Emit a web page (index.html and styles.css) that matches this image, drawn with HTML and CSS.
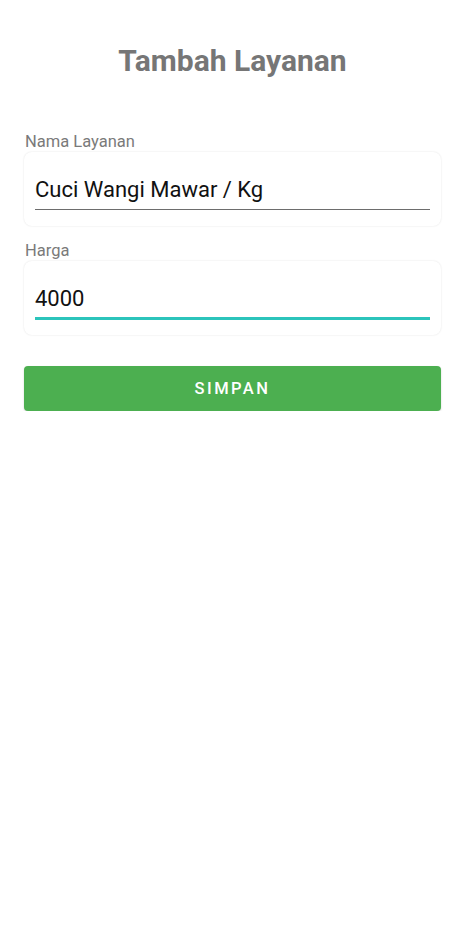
FILE: index.html
```html
<!DOCTYPE html>
<html>
<head>
<meta charset="utf-8">
<link rel="stylesheet" href="styles.css">
</head>
<body>
<main class="page">
  <h1 class="title">Tambah Layanan</h1>
  <form class="form">
    <div class="field">
      <label class="label">Nama Layanan</label>
      <div class="card">
        <div class="input">Cuci Wangi Mawar / Kg</div>
      </div>
    </div>
    <div class="field">
      <label class="label">Harga</label>
      <div class="card">
        <div class="input focused">4000</div>
      </div>
    </div>
    <button type="button" class="btn">SIMPAN</button>
  </form>
</main>
</body>
</html>
```
FILE: styles.css
```css
html, body {
  margin: 0;
  padding: 0;
  background: #ffffff;
}
body {
  font-family: Roboto, "Noto Sans", sans-serif;
}
.page {
  padding: 0 24px 0 24px;
}
.title {
  margin: 0;
  padding-top: 41px;
  height: 40px;
  line-height: 40px;
  text-align: center;
  font-size: 30px;
  font-weight: 700;
  color: #767676;
}
.form {
  padding-top: 53px;
  display: flex;
  flex-direction: column;
}
.field {
  display: flex;
  flex-direction: column;
  margin-bottom: 17px;
}
.label {
  font-size: 16.5px;
  line-height: 18px;
  color: #7a7a7a;
  padding-left: 1px;
  height: 18px;
  margin-top: -1px;
  margin-bottom: 1px;
}
.card {
  height: 74px;
  border-radius: 8px;
  background: #fff;
  box-shadow: 0 0 2px rgba(0,0,0,0.12);
  padding: 0 11px;
  box-sizing: border-box;
  display: flex;
  align-items: flex-start;
}
.input {
  flex: 1;
  margin-top: 21px;
  height: 37px;
  line-height: 34px;
  font-size: 22px;
  color: #111;
  border-bottom: 1px solid #6d6d6d;
  box-sizing: border-box;
}
.input.focused {
  border-bottom: 3px solid #2bc4bb;
  height: 38px;
}
.btn {
  margin-top: 14px;
  height: 45px;
  border: none;
  border-radius: 4px;
  background: #4caf50;
  color: #fff;
  font-family: Roboto, sans-serif;
  font-size: 16.5px;
  font-weight: 500;
  letter-spacing: 2.5px;
  box-shadow: 0 1px 2px rgba(0,0,0,0.18);
  width: 100%;
  padding: 0;
}
```
